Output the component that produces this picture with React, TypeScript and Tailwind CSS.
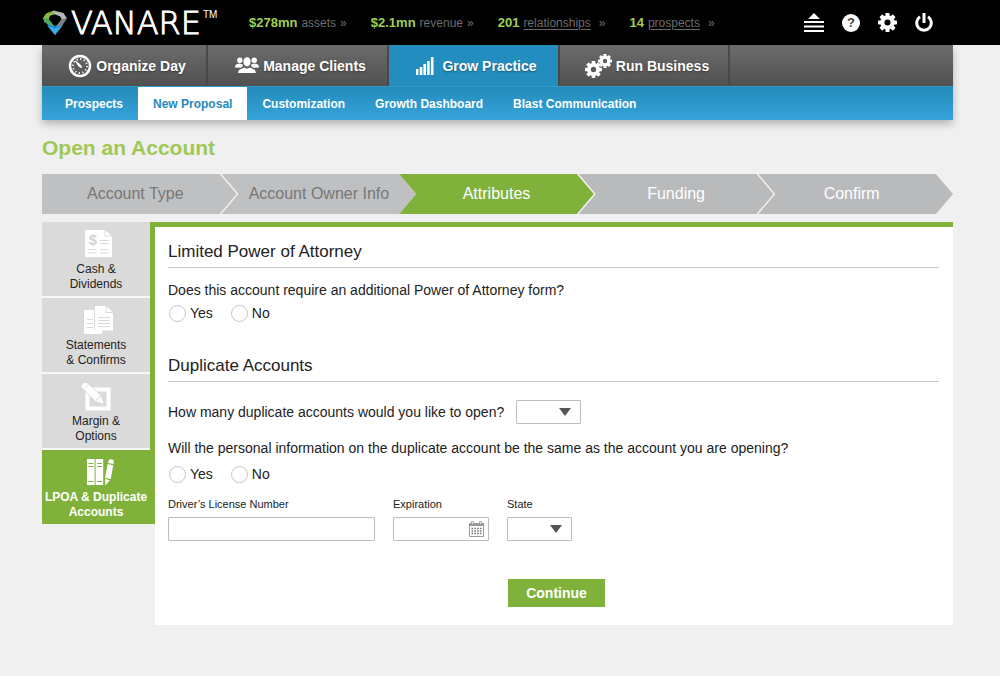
import { useState } from "react";
import type { ReactNode } from "react";

const stats = [
   { value: "$278mn", label: "assets", link: false },
   { value: "$2.1mn", label: "revenue", link: false },
   { value: "201", label: "relationships", link: true },
   { value: "14", label: "prospects", link: true },
];

const subNav = [
   "Prospects",
   "New Proposal",
   "Customization",
   "Growth Dashboard",
   "Blast Communication",
];

const LogoMark = () => (
   <svg width="24" height="25" viewBox="0 0 24 25" aria-hidden="true">
      <path d="M1.5 10.5 L12 16 L22.5 10.5 L12 25 Z" fill="#1b86c8" />
      <path d="M4 15.5 L12 18.5 L20 15 L12 25 Z" fill="#3cace6" />
      <path d="M0 8 L3 3.5 L11 0.5 L12 4 L7 6 L6 9 L11 16.5 L6 14.5 L1.5 12 Z" fill="#84bd3c" />
      <path d="M0 8 L6 9 L11 16.5 L1.5 12 Z" fill="#4ba564" />
      <path d="M10.5 0.5 L20.5 3 L24 8.5 L19 10 L17 6.5 L11 4.5 Z" fill="#b4b7ba" />
      <path d="M18.5 9 L24 8.5 L19 15.5 L13 16.5 Z" fill="#7b8085" />
      <path d="M7 6 L12 4.5 L17 6.5 L18 9.5 L12 15 L6 9.5 Z" fill="#000" />
   </svg>
);

const Gear = ({ size }: { size: number }) => (
   <svg width={size} height={size} viewBox="-10 -10 20 20" aria-hidden="true">
      {[0, 45, 90, 135, 180, 225, 270, 315].map((deg) => (
         <rect
            key={deg}
            x="-2.2"
            y="-10"
            width="4.4"
            height="6"
            rx="0.8"
            fill="#fff"
            transform={`rotate(${deg})`}
         />
      ))}
      <circle r="5.4" fill="none" stroke="#fff" strokeWidth="4.4" />
   </svg>
);

const DialIcon = () => (
   <svg width="24" height="24" viewBox="0 0 24 24" fill="none" stroke="#fff">
      <circle cx="12" cy="12" r="10" strokeWidth="2.4" />
      <circle cx="12" cy="12" r="7" strokeWidth="1.8" strokeDasharray="1.2 2.465" />
      <path d="M7.5 7 L12.5 11 L13.5 13.5 L11 12.5 Z" fill="#fff" strokeWidth="1" />
   </svg>
);

const PeopleIcon = () => (
   <svg width="24" height="17" viewBox="0 0 24 17" fill="#fff">
      <circle cx="4.8" cy="3.2" r="2.7" />
      <circle cx="19.2" cy="3.2" r="2.7" />
      <path d="M0 10.5 C0 7.5 2 7 4.5 6.6 L8 7.4 L7.5 9.5 L5.5 10.8 Z" />
      <path d="M24 10.5 C24 7.5 22 7 19.5 6.6 L16 7.4 L16.5 9.5 L18.5 10.8 Z" />
      <ellipse cx="12" cy="4.8" rx="3.6" ry="4.6" />
      <path d="M3.2 16 C3.2 12.5 6 12 9.3 10.6 C11 12 13 12 14.7 10.6 C18 12 20.8 12.5 20.8 16 Z" />
   </svg>
);

const BarsIcon = () => (
   <svg width="18" height="18" viewBox="0 0 18 18" fill="#fff">
      <path d="M0 12h2.4v6H0z M3.7 10h2.6v8H3.7z M7.4 7h2.6v11H7.4z M11.1 4h2.6v14h-2.6z M14.9 0h2.6v18h-2.6z" />
   </svg>
);

const GearsIcon = () => (
   <span className="flex">
      <span className="mt-[7px]">
         <Gear size={17} />
      </span>
      <span className="-ml-1">
         <Gear size={14} />
      </span>
   </span>
);

const MoneyDocIcon = () => (
   <svg width="27" height="27" viewBox="0 0 27 27">
      <path d="M0 0 H19.5 V6.5 H27 V27 H0 Z" fill="#fff" />
      <path d="M20.5 0.5 L26.5 5.5 H20.5 Z" fill="#fff" />
      <text
         x="8"
         y="15"
         textAnchor="middle"
         fontFamily="Liberation Sans, sans-serif"
         fontWeight="700"
         fontSize="15"
         fill="#d3d3d3"
      >
         $
      </text>
      <path d="M15 10.5h9 M15 13.5h9 M3 19.5h9 M15 19.5h9 M3 23h9 M15 23h9" stroke="#dadada" />
   </svg>
);

const DocsIcon = () => (
   <svg width="29" height="28" viewBox="0 0 29 28">
      <path d="M0 4 H10 V24 H18 V28 H0 Z" fill="#fff" />
      <path d="M3 13.5h6 M3 17.5h6 M3 21.5h6" stroke="#dadada" />
      <path d="M11 0 H21.5 V7 H29 V24.5 H11 Z" fill="#fff" />
      <path d="M22.5 0.5 L28.5 6 H22.5 Z" fill="#fff" />
      <path d="M14 11.5h12 M14 14.5h12 M14 17.5h12 M14 20.5h12" stroke="#dadada" />
   </svg>
);

const EditIcon = () => (
   <svg width="34" height="29" viewBox="0 0 34 29">
      <path d="M6.5 9 V26.5 H27.5 V7.5 H12" fill="none" stroke="#fff" strokeWidth="4" />
      <path
         d="M0.5 5.5 C0 2 2.5 0 6 0.5 L20 13.5 L23.5 22.5 L14.5 19.5 Z"
         fill="#fff"
         stroke="#dadada"
      />
      <path d="M2.5 7.5 L7.5 2.5 M14.5 19 L20 14" stroke="#dadada" />
   </svg>
);

const BooksIcon = () => (
   <svg width="33" height="28" viewBox="-5 0 33 28">
      <path d="M0 1h7.6v26H0z M8.6 1h7.6v26H8.6z" fill="#fff" />
      <path d="M1.5 5.5h5 M1.5 8.5h5 M10 5.5h5 M10 8.5h5 M1.5 23.5h5 M10 23.5h5" stroke="#80b13b" />
      <path d="M21.5 3 C22 0 27.5 1 27 4 L26.5 6 L21 5 Z" fill="#fff" />
      <path d="M20.6 6 L26.3 7.2 L23.7 21 L18 20 Z" fill="#fff" />
      <path d="M18 21 L22.8 22.2 L18.4 27.5 Z" fill="#fff" />
   </svg>
);

const CalendarIcon = () => (
   <svg width="15" height="16" viewBox="0 0 15 16" aria-hidden="true">
      <path d="M0.5 2.5h14v13H0.5z" fill="#fff" stroke="#999" />
      <path d="M0 2h15v3H0z" fill="#999" />
      <path d="M2.5 0.5h2v2.5h-2z M10.5 0.5h2v2.5h-2z" fill="#fff" stroke="#999" strokeWidth="0.8" />
      <path
         d="M2.5 7.5h10 M2.5 10h10 M2.5 12.5h10"
         stroke="#777"
         strokeWidth="1.5"
         strokeDasharray="1.6 1.2"
      />
   </svg>
);

const mainNav = [
   { label: "Organize Day", icon: <DialIcon />, width: "w-[166px]", gap: "gap-1" },
   { label: "Manage Clients", icon: <PeopleIcon />, width: "w-[181px]", gap: "gap-1" },
   { label: "Grow Practice", icon: <BarsIcon />, width: "w-[171px]", gap: "gap-2" },
   { label: "Run Business", icon: <GearsIcon />, width: "w-[170px]", gap: "gap-1" },
];

const steps = ["Account Type", "Account Owner Info", "Attributes", "Funding", "Confirm"];

const sections = [
   { lines: ["Cash &", "Dividends"], icon: <MoneyDocIcon /> },
   { lines: ["Statements", "& Confirms"], icon: <DocsIcon /> },
   { lines: ["Margin &", "Options"], icon: <EditIcon /> },
   { lines: ["LPOA & Duplicate", "Accounts"], icon: <BooksIcon /> },
];

const Header = () => (
   <header className="flex h-[45px] items-center bg-black pr-[67px] pl-[43px]">
      <a href="#" className="flex w-[186px] shrink-0 items-center text-white">
         <LogoMark />
         <span className="ml-1 font-['DejaVu_Sans'] text-[32px] leading-none font-extralight [-webkit-text-stroke:1px_white]">
            VANARE
         </span>
         <span className="mb-4 ml-0.5 text-[10px] leading-none">TM</span>
      </a>
      <ul className="ml-5 flex gap-6 whitespace-nowrap">
         {stats.map((s) => (
            <li key={s.label} className="flex items-baseline gap-1 text-xs text-[#6c6c6c]">
               <strong className="text-[13px] text-[#a1cf56]">{s.value}</strong>
               {s.link ? (
                  <a href="#" className="underline underline-offset-2">
                     {s.label}
                  </a>
               ) : (
                  <span>{s.label}</span>
               )}
               <span className={s.link ? "ml-1" : ""}>»</span>
            </li>
         ))}
      </ul>
      <div className="ml-auto flex items-center gap-[18px]">
         <button aria-label="Menu">
            <svg width="20" height="19" viewBox="0 0 20 19" fill="#fff">
               <path d="M10 0 L16 6 H4 Z M0 8h20v2H0z M0 12.5h20v2H0z M0 17h20v2H0z" />
            </svg>
         </button>
         <button
            aria-label="Help"
            className="flex size-[18px] items-center justify-center rounded-full bg-white text-[13px] leading-none font-bold text-[#444]"
         >
            ?
         </button>
         <button aria-label="Settings">
            <Gear size={19} />
         </button>
         <button aria-label="Log out">
            <svg width="18" height="19" viewBox="0 0 18 19" fill="none" stroke="#fff" strokeWidth="3">
               <path d="M5 3.8 A7.3 7.3 0 1 0 13 3.8" />
               <path d="M9 0 V10" />
            </svg>
         </button>
      </div>
   </header>
);

const Navigation = () => (
   <nav className="shadow-[0_4px_8px_rgba(0,0,0,0.25)]">
      <ul className="flex h-[41px] bg-linear-to-b from-[#6c6c6c] to-[#505050]">
         {mainNav.map((item) => (
            <li key={item.label} className={`${item.width} border-r-2 border-[#494949]`}>
               <a
                  href="#"
                  className={`flex h-full items-center justify-center pl-1.5 text-sm font-bold whitespace-nowrap text-white [text-shadow:0_1px_2px_rgba(0,0,0,0.4)] ${
                     item.gap
                  } ${item.label === "Grow Practice" ? "bg-[#248dbf]" : ""}`}
               >
                  {item.icon}
                  {item.label}
               </a>
            </li>
         ))}
      </ul>
      <ul className="flex h-[34px] border-t border-[#3397ca] bg-linear-to-b from-[#238bbb] to-[#36a4da] pl-2">
         {subNav.map((label) => (
            <li key={label}>
               <a
                  href="#"
                  className={`flex h-full items-center px-[15px] text-xs font-bold ${
                     label === "New Proposal" ? "bg-white text-[#2589bb]" : "text-white"
                  }`}
               >
                  {label}
               </a>
            </li>
         ))}
      </ul>
   </nav>
);

const Steps = () => (
   <ol className="mt-3 flex h-10 text-base">
      {steps.map((step, i) => {
         const shape =
            i === 0
               ? "[clip-path:polygon(0_0,calc(100%-17px)_0,100%_50%,calc(100%-17px)_100%,0_100%)]"
               : "[clip-path:polygon(0_0,calc(100%-17px)_0,100%_50%,calc(100%-17px)_100%,0_100%,17px_50%)]";
         const color =
            i < 2
               ? "bg-[#bfc0c2] text-[#777]"
               : i === 2
                 ? "bg-[#80b23b] text-white"
                 : "bg-[#b9babc] text-white";
         const overlap = i === 0 ? "" : i === 2 ? "-ml-[17px]" : "-ml-[15px]";
         return (
            <li
               key={step}
               className={`flex flex-1 items-center justify-center whitespace-nowrap ${shape} ${color} ${overlap}`}
            >
               <span className={i === 0 || i === 4 ? "pr-2" : ""}>{step}</span>
            </li>
         );
      })}
   </ol>
);

const Sidebar = () => (
   <nav className="flex w-[113px] shrink-0 flex-col gap-0.5 self-start border-r-[5px] border-[#80b23b] bg-[#f8f8f8]">
      {sections.map((s, i) => (
         <a
            key={s.lines[0]}
            href="#"
            className={`flex h-[74px] flex-col items-center pt-2 text-xs leading-[15px] whitespace-nowrap ${
               i === 3 ? "bg-[#80b23b] font-bold text-white" : "bg-[#dadada] text-[#222]"
            }`}
         >
            <span className="flex h-8 items-start pl-1">{s.icon}</span>
            <span className="text-center">
               {s.lines[0]}
               <br />
               {s.lines[1]}
            </span>
         </a>
      ))}
   </nav>
);

const SectionTitle = ({ children }: { children: ReactNode }) => (
   <h2 className="border-b border-[#c6c6c6] pb-[3px] text-[17px] leading-6">{children}</h2>
);

const YesNo = ({ name, legend, gap }: { name: string; legend: string; gap: string }) => {
   const [value, setValue] = useState("");

   return (
      <fieldset>
         <legend className="leading-5">{legend}</legend>
         <div className={`flex h-5 gap-[18px] pl-px ${gap}`}>
            {["Yes", "No"].map((option) => (
               <label key={option} className="flex items-center gap-1">
                  <input
                     type="radio"
                     name={name}
                     value={option}
                     checked={value === option}
                     onChange={() => setValue(option)}
                     className="size-[17px] appearance-none rounded-full border border-[#c4c4c4] bg-white checked:border-[5px] checked:border-[#80b23b]"
                  />
                  {option}
               </label>
            ))}
         </div>
      </fieldset>
   );
};

const SelectBox = ({ id, options }: { id: string; options: string[] }) => (
   <span className="relative block w-[65px]">
      <select
         id={id}
         defaultValue=""
         className="block h-6 w-full appearance-none rounded-[1px] border border-[#bdbdbd] bg-white pl-2 text-xs"
      >
         <option value=""></option>
         {options.map((o) => (
            <option key={o}>{o}</option>
         ))}
      </select>
      <svg
         className="pointer-events-none absolute top-2 right-2.5"
         width="12"
         height="8"
         viewBox="0 0 12 8"
      >
         <path d="M0 0 H12 L6 8 Z" fill="#555" />
      </svg>
   </span>
);

const AttorneyForm = () => (
   <form
      className="flex-1 border-t-[5px] border-[#80b23b] bg-white pt-[13px] pr-3.5 pb-[18px] pl-[13px] text-sm text-[#222]"
      onSubmit={(e) => e.preventDefault()}
   >
      <SectionTitle>Limited Power of Attorney</SectionTitle>
      <div className="mt-3">
         <YesNo
            name="poa"
            legend="Does this account require an additional Power of Attorney form?"
            gap="mt-[3px]"
         />
      </div>

      <div className="mt-[31px]">
         <SectionTitle>Duplicate Accounts</SectionTitle>
      </div>
      <div className="mt-[18px] flex items-center gap-3">
         <label htmlFor="count">How many duplicate accounts would you like to open?</label>
         <SelectBox id="count" options={["1", "2", "3"]} />
      </div>
      <div className="mt-3.5">
         <YesNo
            name="sameInfo"
            legend="Will the personal information on the duplicate account be the same as the account you are opening?"
            gap="mt-1.5"
         />
      </div>

      <div className="mt-3 flex gap-[18px]">
         <div className="w-[207px]">
            <label htmlFor="license" className="block text-[11px] leading-4">
               Driver’s License Number
            </label>
            <input
               id="license"
               type="text"
               className="mt-[5px] block h-6 w-full rounded-[1px] border border-[#bdbdbd] px-2 text-xs"
            />
         </div>
         <div className="w-24">
            <label htmlFor="expiration" className="block text-[11px] leading-4">
               Expiration
            </label>
            <div className="relative mt-[5px]">
               <input
                  id="expiration"
                  type="text"
                  className="block h-6 w-full rounded-[1px] border border-[#bdbdbd] pr-6 pl-2 text-xs"
               />
               <button type="button" aria-label="Pick a date" className="absolute top-1 right-[5px]">
                  <CalendarIcon />
               </button>
            </div>
         </div>
         <div>
            <label htmlFor="state" className="mb-[5px] block text-[11px] leading-4">
               State
            </label>
            <SelectBox id="state" options={["CA", "NY", "TX"]} />
         </div>
      </div>

      <div className="mt-[38px] flex justify-center pl-1.5">
         <button type="submit" className="h-7 w-[97px] bg-[#80b23b] font-bold text-white">
            Continue
         </button>
      </div>
   </form>
);

const App = () => {
   return (
      <div className="min-h-screen bg-[#f0f0f0] font-['Liberation_Sans',Arial,sans-serif]">
         <Header />
         <div className="pr-[47px] pl-[42px]">
            <Navigation />
            <h1 className="mt-3.5 text-[21px] leading-7 font-bold text-[#9fc856]">
               Open an Account
            </h1>
            <Steps />
            <main className="mt-2 flex">
               <Sidebar />
               <AttorneyForm />
            </main>
         </div>
      </div>
   );
};

export default App;
